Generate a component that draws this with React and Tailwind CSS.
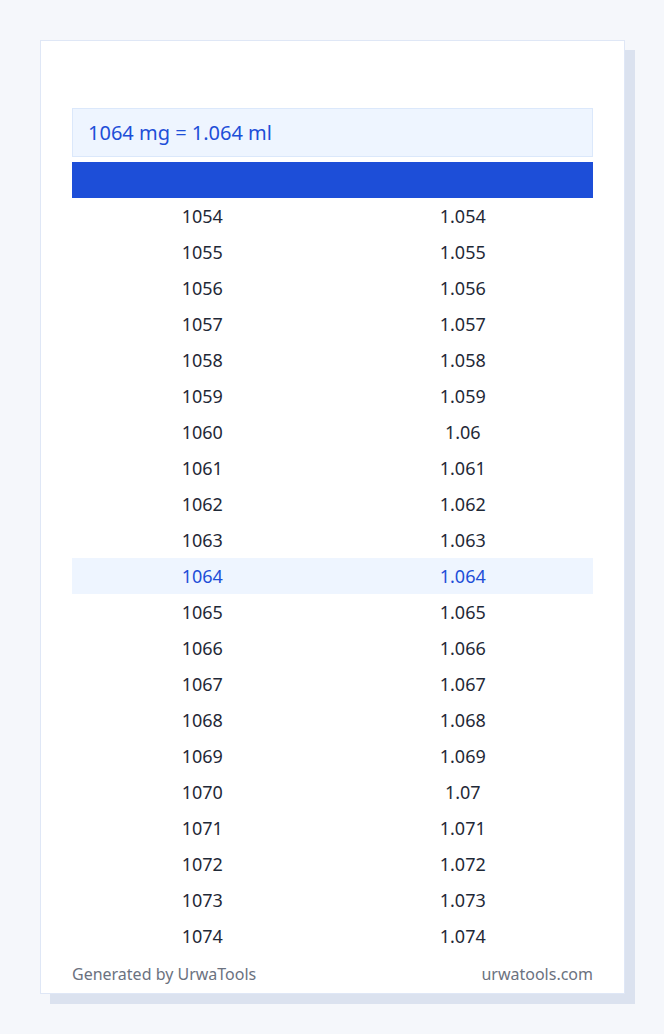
export default function App() {
  const rows = [];
  for (let mg = 1054; mg <= 1074; mg++) {
    rows.push({ mg, ml: String(mg / 1000) });
  }
  return (
    <div
      className="min-h-[1034px] w-full bg-[#f5f7fb] pt-[40px] pl-[40px]"
      style={{ fontFamily: '"Noto Sans", "Open Sans", sans-serif' }}
    >
      <div className="w-[585px] bg-white border border-[#dfe7f6] shadow-[10px_10px_0_0_#dbe2ef] px-[31px] pt-[67px]">
        <div className="h-[49px] border border-[#dbe8fb] bg-[#eef5ff] flex items-center px-[15px] text-[20px] text-[#1d4ed8]">
          1064 mg = 1.064 ml
        </div>
        <div className="mt-[5px] h-[36px] bg-[#1d4ed8]" />
        <div>
          {rows.map((r) => (
            <div
              key={r.mg}
              className={
                r.mg === 1064
                  ? "grid grid-cols-2 h-[36px] items-center text-center text-[18px] bg-[#eef5ff] text-[#1d4ed8]"
                  : "grid grid-cols-2 h-[36px] items-center text-center text-[18px] text-[#1f2937]"
              }
            >
              <div className="pt-[1px]">{r.mg}</div>
              <div className="pt-[1px]">{r.ml}</div>
            </div>
          ))}
        </div>
        <div className="flex justify-between items-center h-[39px] text-[16px] text-[#6b7280]">
          <span>Generated by UrwaTools</span>
          <span>urwatools.com</span>
        </div>
      </div>
    </div>
  );
}
